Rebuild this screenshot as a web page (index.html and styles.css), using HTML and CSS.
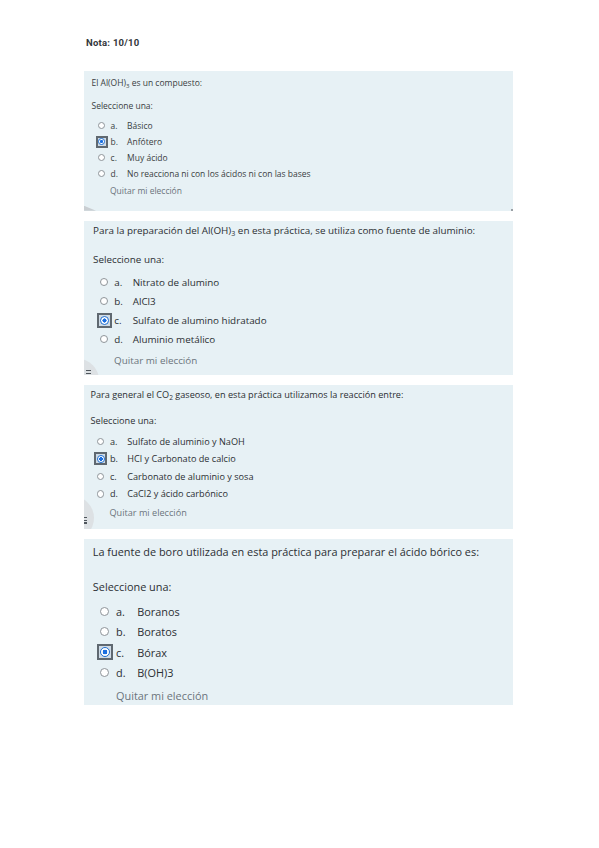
FILE: index.html
```html
<!DOCTYPE html>
<html lang="es">
<head>
<meta charset="utf-8">
<title>Nota: 10/10</title>
<link rel="stylesheet" href="styles.css">
</head>
<body>
<main class="page">
  <div class="grade">Nota: 10/10</div>

  <section class="que q1">
    <div class="qtext">El Al(OH)<sub>3</sub> es un compuesto:</div>
    <div class="prompt">Seleccione una:</div>
    <div class="answers">
      <div class="opt"><span class="lead"><span class="slot"><span class="radio"></span></span><span class="letter">a.</span></span><span class="txt">Básico</span></div>
      <div class="opt sel"><span class="lead"><span class="slot"><span class="radio"></span></span><span class="letter">b.</span></span><span class="txt">Anfótero</span></div>
      <div class="opt"><span class="lead"><span class="slot"><span class="radio"></span></span><span class="letter">c.</span></span><span class="txt">Muy ácido</span></div>
      <div class="opt"><span class="lead"><span class="slot"><span class="radio"></span></span><span class="letter">d.</span></span><span class="txt">No reacciona ni con los ácidos ni con las bases</span></div>
    </div>
    <div class="clear">Quitar mi elección</div>
    <span class="wedge"></span>
    <span class="corner"></span>
  </section>

  <section class="que q2">
    <div class="qtext">Para la preparación del Al(OH)<sub>3</sub> en esta práctica, se utiliza como fuente de aluminio:</div>
    <div class="prompt">Seleccione una:</div>
    <div class="answers">
      <div class="opt"><span class="lead"><span class="slot"><span class="radio"></span></span><span class="letter">a.</span></span><span class="txt">Nitrato de alumino</span></div>
      <div class="opt"><span class="lead"><span class="slot"><span class="radio"></span></span><span class="letter">b.</span></span><span class="txt">AlCl3</span></div>
      <div class="opt sel"><span class="lead"><span class="slot"><span class="radio"></span></span><span class="letter">c.</span></span><span class="txt">Sulfato de alumino hidratado</span></div>
      <div class="opt"><span class="lead"><span class="slot"><span class="radio"></span></span><span class="letter">d.</span></span><span class="txt">Aluminio metálico</span></div>
    </div>
    <div class="clear">Quitar mi elección</div>
    <span class="fab"></span>
    <span class="bars bars-2"><i></i><i></i></span>
  </section>

  <section class="que q3">
    <div class="qtext">Para general el CO<sub>2</sub> gaseoso, en esta práctica utilizamos la reacción entre:</div>
    <div class="prompt">Seleccione una:</div>
    <div class="answers">
      <div class="opt"><span class="lead"><span class="slot"><span class="radio"></span></span><span class="letter">a.</span></span><span class="txt">Sulfato de aluminio y NaOH</span></div>
      <div class="opt sel"><span class="lead"><span class="slot"><span class="radio"></span></span><span class="letter">b.</span></span><span class="txt">HCl y Carbonato de calcio</span></div>
      <div class="opt"><span class="lead"><span class="slot"><span class="radio"></span></span><span class="letter">c.</span></span><span class="txt">Carbonato de aluminio y sosa</span></div>
      <div class="opt"><span class="lead"><span class="slot"><span class="radio"></span></span><span class="letter">d.</span></span><span class="txt">CaCl2 y ácido carbónico</span></div>
    </div>
    <div class="clear">Quitar mi elección</div>
    <span class="fab"></span>
    <span class="bars bars-3"><i></i><i></i><i></i></span>
  </section>

  <section class="que q4">
    <div class="qtext">La fuente de boro utilizada en esta práctica para preparar el ácido bórico es:</div>
    <div class="prompt">Seleccione una:</div>
    <div class="answers">
      <div class="opt"><span class="lead"><span class="slot"><span class="radio"></span></span><span class="letter">a.</span></span><span class="txt">Boranos</span></div>
      <div class="opt"><span class="lead"><span class="slot"><span class="radio"></span></span><span class="letter">b.</span></span><span class="txt">Boratos</span></div>
      <div class="opt sel"><span class="lead"><span class="slot"><span class="radio"></span></span><span class="letter">c.</span></span><span class="txt">Bórax</span></div>
      <div class="opt"><span class="lead"><span class="slot"><span class="radio"></span></span><span class="letter">d.</span></span><span class="txt">B(OH)3</span></div>
    </div>
    <div class="clear">Quitar mi elección</div>
  </section>
</main>
</body>
</html>
```
FILE: styles.css
```css
* { box-sizing: border-box; }

html, body { margin: 0; padding: 0; background: #ffffff; }

body {
  font-family: "Open Sans", "Noto Sans", sans-serif;
  color: #2b2f33;
}

.page {
  padding: 36px 0 0 84px;
}

.grade {
  font-family: Roboto, "Liberation Sans", sans-serif;
  font-weight: 700;
  font-size: 9.5px;
  letter-spacing: 0.25px;
  line-height: 14px;
  color: #33373b;
  margin: 0 0 21px 2px;
}

/* question card */
.que {
  position: relative;
  overflow: hidden;
  width: 429px;
  background: #e7f1f5;
  margin-bottom: 10px;
  font-size: var(--fs);
  padding: var(--pt) 0 var(--pb) var(--pl);
}

.qtext, .prompt { line-height: var(--lh); white-space: nowrap; }
.prompt { margin-top: var(--gp); }
.answers { margin-top: var(--ga); padding-left: var(--x0); }
.opt {
  display: grid;
  grid-template-columns: var(--lead) auto;
  align-items: center;
  height: var(--ol);
  white-space: nowrap;
}
.lead { display: flex; align-items: center; }
.slot {
  flex: none;
  width: var(--box);
  height: var(--box);
  display: flex;
  align-items: center;
  justify-content: center;
}
.letter { margin-left: var(--lg); }

.radio {
  width: var(--d);
  height: var(--d);
  border-radius: 50%;
  border: 1px solid #8e9499;
  background: #ffffff;
}
.opt.sel .slot {
  border: 2px solid #5f6870;
  background: #cfdbe6;
}
.opt.sel .radio {
  width: var(--dd);
  height: var(--dd);
  border: 1px solid #1f6fd1;
  background: radial-gradient(circle, #1a6ee0 0 38%, #ffffff 46% 100%);
}

.clear {
  margin-top: var(--gq);
  margin-left: var(--qx);
  line-height: var(--ql);
  color: #6b747c;
  white-space: nowrap;
}

sub {
  font-size: 0.72em;
  line-height: 0;
  vertical-align: -0.3em;
}

/* per-card metrics */
.q1 {
  --fs: 8.5px; --lh: 16px; --pt: 4px; --pb: 12px; --pl: 7.5px;
  --gp: 6.7px; --ga: 4px; --x0: 4.2px; --ol: 16px;
  --lead: 31.4px; --box: 12px; --lg: 2.9px; --d: 7px; --dd: 7px;
  --gq: 1px; --qx: 18.5px; --ql: 16px;
  color: #3a3e42;
}
.q2 {
  --fs: 9.85px; --lh: 19px; --pt: 0px; --pb: 4.8px; --pl: 9px;
  --gp: 10.5px; --ga: 3.7px; --x0: 3.7px; --ol: 18.9px;
  --lead: 36px; --box: 15px; --lg: 2.6px; --d: 8px; --dd: 9px;
  --gq: 2.4px; --qx: 21px; --ql: 18.9px;
}
.q3 {
  --fs: 9.15px; --lh: 17.7px; --pt: 1.2px; --pb: 7px; --pl: 6.5px;
  --gp: 9px; --ga: 2.4px; --x0: 3.5px; --ol: 17.5px;
  --lead: 33.3px; --box: 13.3px; --lg: 2.6px; --d: 7.5px; --dd: 8px;
  --gq: 1.6px; --qx: 19px; --ql: 17.5px;
}
.q4 {
  --fs: 10.9px; --lh: 20px; --pt: 3px; --pb: 0px; --pl: 8.8px;
  --gp: 15px; --ga: 4.8px; --x0: 3.9px; --ol: 20.3px;
  --lead: 40.6px; --box: 16px; --lg: 3.3px; --d: 9px; --dd: 10px;
  --gq: 4px; --qx: 23.2px; --ql: 18px;
}

/* overlay artefacts of the captured page */
.fab {
  position: absolute;
  width: 42px;
  height: 42px;
  border-radius: 50%;
  background: #dde1e4;
}
.q2 .fab { left: -27px; bottom: -26px; }
.q3 .fab { left: -34px; bottom: -11px; width: 44px; height: 44px; }

.bars {
  position: absolute;
  display: flex;
  flex-direction: column;
  gap: 1.5px;
}
.bars i { display: block; height: 1px; background: #50565c; }
.bars-2 { left: 2px; bottom: 1px; }
.bars-2 i { width: 5px; }
.bars-3 { left: 0; bottom: 5px; }
.bars-3 i { width: 3px; height: 1.2px; }

.wedge {
  position: absolute;
  left: 0;
  bottom: 0;
  width: 12px;
  height: 5px;
  background: #c9ced2;
  clip-path: polygon(0 0, 100% 100%, 0 100%);
}
.corner {
  position: absolute;
  right: 0;
  bottom: 0;
  width: 2px;
  height: 2px;
  background: #9aa0a5;
}
```
